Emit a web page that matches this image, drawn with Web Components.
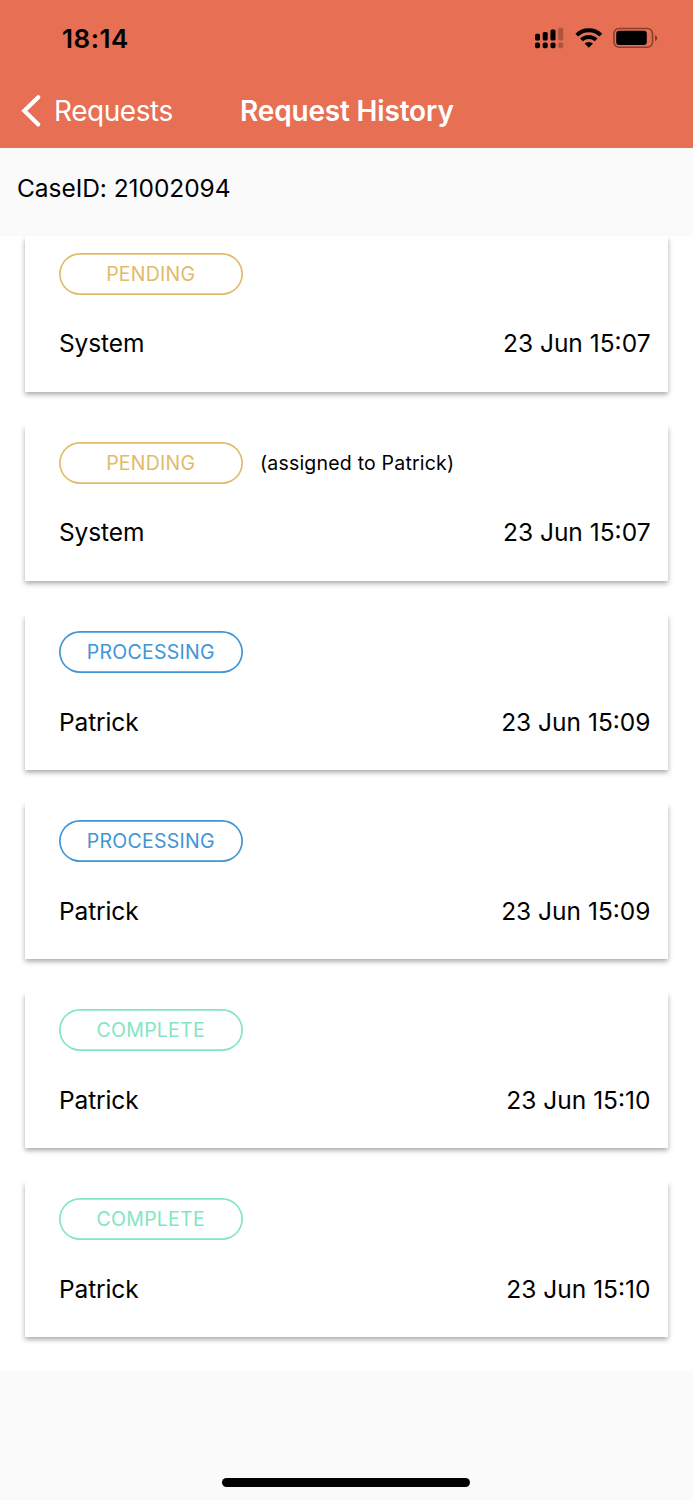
<!DOCTYPE html>
<html lang="en">
<head>
<meta charset="utf-8">
<title>Request History</title>
<style>
html, body { margin: 0; height: 1500px; overflow: hidden; background: #fafafa; }
body { font-family: Inter, "Liberation Sans", sans-serif; color: #000; }
</style>
</head>
<body>
<request-screen></request-screen>

<template id="status-bar">
<style>
:host { display: flex; align-items: center; justify-content: space-between; height: 75px; padding: 0 35px 0 62px; box-sizing: border-box; color: #000; }
span { font-size: 26px; line-height: 32px; font-weight: 600; letter-spacing: .55px; padding-top: 2px; }
svg { display: block; }
</style>
<span>18:14</span>
<svg width="124" height="24" viewBox="534 26 124 24">
<g>
<rect x="535" y="33.8" width="5" height="6.6" rx="1.5"/><rect x="542.7" y="32" width="5" height="8.4" rx="1.5"/><rect x="550.5" y="29.5" width="5" height="10.9" rx="1.5"/>
<rect x="535" y="42.6" width="5" height="5.6" rx="1.7"/><rect x="542.7" y="42.6" width="5" height="5.6" rx="1.7"/><rect x="550.5" y="42.6" width="5" height="5.6" rx="1.7"/>
<g opacity=".24"><rect x="558.2" y="27.8" width="5" height="12.6" rx="1.5"/><rect x="558.2" y="42.6" width="5" height="5.6" rx="1.7"/></g>
</g>
<g fill="none" stroke="#000" stroke-width="4"><path d="M576.8 35.2a17.1 17.1 0 0 1 24 0"/><path d="M581.5 39.9a10.4 10.4 0 0 1 14.6 0"/></g>
<path d="M588.8 47.7l-4.2-4.1a6 6 0 0 1 8.4 0z"/>
<rect x="613.9" y="28.5" width="38.6" height="18.8" rx="5.2" fill="none" stroke="#000" stroke-opacity=".42" stroke-width="1.6"/>
<rect x="616.2" y="30.8" width="30.6" height="14.2" rx="3"/>
<path d="M655.1 35v6.3q2-1 2-3.15t-2-3.15z" opacity=".5"/>
</svg>
</template>

<template id="nav-bar">
<style>
:host { display: grid; grid-template-columns: 240px auto 1fr; align-items: center; height: 73px; box-sizing: border-box; color: #fff; border-bottom: 1px solid #dc7862; font-size: 28px; line-height: 34px; white-space: nowrap; }
.back { display: flex; align-items: center; padding-left: 20px; gap: 12px; }
.back svg { display: block; }
.back span { letter-spacing: -.45px; }
.title { font-weight: 600; letter-spacing: -.17px; }
</style>
<div class="back"><svg width="22" height="34" viewBox="0 0 22 34"><path d="M18.3 3.2L4.3 16.8l14 13.6" fill="none" stroke="#fff" stroke-width="4.2" stroke-linecap="round" stroke-linejoin="miter"/></svg><span><slot name="back"></slot></span></div>
<div class="title"><slot></slot></div>
</template>

<template id="status-badge">
<style>
:host { display: flex; align-items: center; justify-content: center; width: 184.5px; height: 42px; box-sizing: border-box; box-shadow: inset 0 0 0 1.7px currentColor; border-radius: 21px; font-size: 19.5px; line-height: 24px; letter-spacing: .25px; color: #e1bb6a; }
:host([kind="processing"]) { color: #3f95d5; }
:host([kind="complete"]) { color: #82e6c3; }
</style>
<slot></slot>
</template>

<template id="history-card">
<style>
:host { display: block; height: 189.1px; padding: 0 25px; box-sizing: border-box; }
.card { height: 156px; box-sizing: border-box; padding: 17px 17.5px 0 34px; background: #fff; box-shadow: 0 3.4px 5px rgba(0,0,0,.34); clip-path: inset(0 -12px -14px -12px); }
.top { display: flex; align-items: center; gap: 17px; height: 42px; margin-left: -.5px; }
.note { font-size: 19.5px; line-height: 24px; letter-spacing: .2px; }
.row { display: flex; justify-content: space-between; margin-top: 32.4px; font-size: 24.5px; line-height: 32px; }
.row .who { letter-spacing: -.12px; }
</style>
<div class="card">
<div class="top"><slot name="badge"></slot><span class="note"><slot name="note"></slot></span></div>
<div class="row"><span class="who"><slot name="who"></slot></span><span class="when"><slot name="when"></slot></span></div>
</div>
</template>

<template id="request-screen">
<style>
:host { display: flex; flex-direction: column; height: 1500px; background: #fafafa; }
header { background: #e66f54; height: 148px; }
.case { height: 88px; box-sizing: border-box; padding: 24px 17px 0; font-size: 24.5px; line-height: 32px; letter-spacing: -.05px; }
main { background: #fff; height: 1134.6px; }
footer { flex: 1; display: flex; align-items: flex-end; justify-content: center; padding: 0 1px 13.5px 0; }
.home { width: 248px; height: 8.5px; border-radius: 5px; background: #000; }
</style>
<header><status-bar></status-bar><nav-bar><span slot="back">Requests</span>Request History</nav-bar></header>
<div class="case">CaseID: 21002094</div>
<main>
<history-card><status-badge slot="badge">PENDING</status-badge><span slot="who">System</span><span slot="when">23 Jun 15:07</span></history-card>
<history-card><status-badge slot="badge">PENDING</status-badge><span slot="note">(assigned to Patrick)</span><span slot="who">System</span><span slot="when">23 Jun 15:07</span></history-card>
<history-card><status-badge slot="badge" kind="processing">PROCESSING</status-badge><span slot="who">Patrick</span><span slot="when">23 Jun 15:09</span></history-card>
<history-card><status-badge slot="badge" kind="processing">PROCESSING</status-badge><span slot="who">Patrick</span><span slot="when">23 Jun 15:09</span></history-card>
<history-card><status-badge slot="badge" kind="complete">COMPLETE</status-badge><span slot="who">Patrick</span><span slot="when">23 Jun 15:10</span></history-card>
<history-card><status-badge slot="badge" kind="complete">COMPLETE</status-badge><span slot="who">Patrick</span><span slot="when">23 Jun 15:10</span></history-card>
</main>
<footer><div class="home"></div></footer>
</template>

<script>
class TemplateElement extends HTMLElement {
  constructor() {
    super();
    const source = document.getElementById(this.localName);
    this.attachShadow({ mode: "open" }).append(source.content.cloneNode(true));
  }
}
for (const name of ["status-bar", "nav-bar", "status-badge", "history-card", "request-screen"]) {
  customElements.define(name, class extends TemplateElement {});
}
</script>
</body>
</html>
